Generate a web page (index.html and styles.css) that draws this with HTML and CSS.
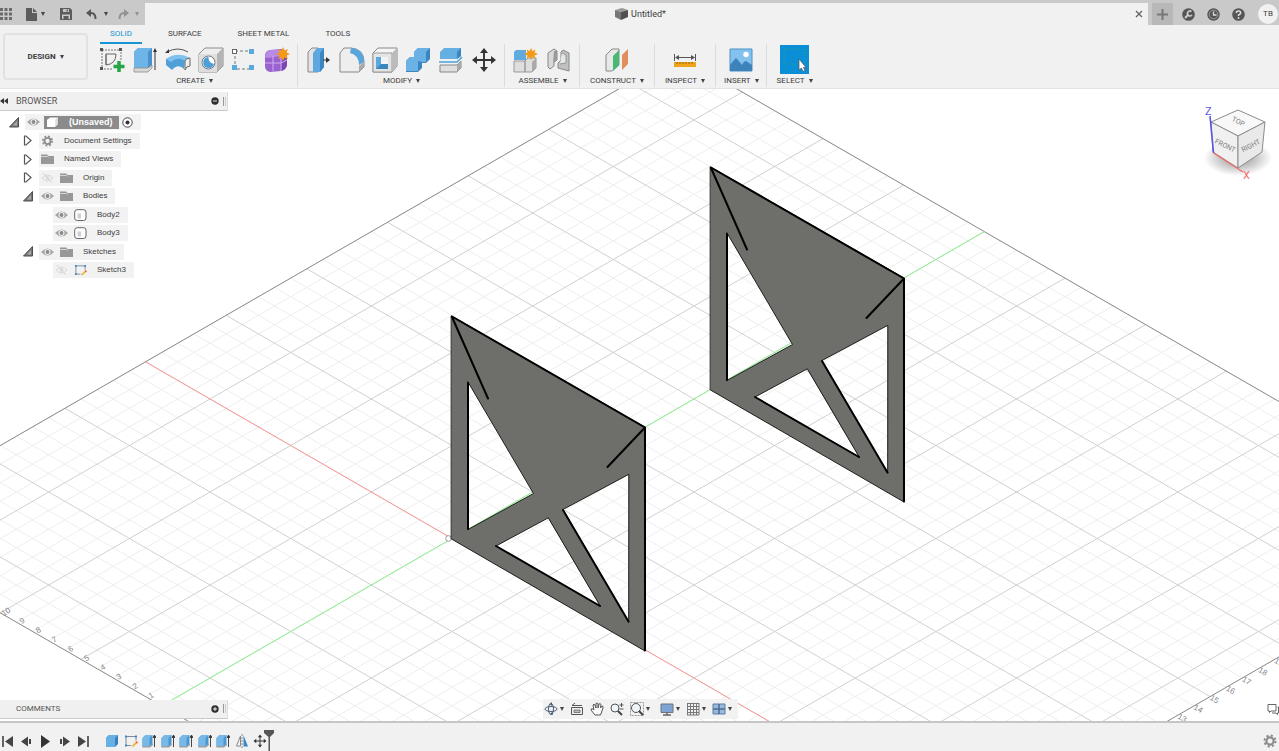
FILE: index.html
```html
<!DOCTYPE html>
<html lang="en">
<head>
<meta charset="utf-8">
<title>Untitled*</title>
<link rel="stylesheet" href="styles.css">
</head>
<body>
<svg class="defs" aria-hidden="true">
  <defs>
    <linearGradient id="g-blue" x1="0" y1="0" x2="1" y2="1"><stop offset="0" stop-color="#7dbcea"/><stop offset="1" stop-color="#4a9ad6"/></linearGradient>
    <radialGradient id="g-shadow"><stop offset="0" stop-color="#000" stop-opacity=".45"/><stop offset="1" stop-color="#000" stop-opacity="0"/></radialGradient>
  </defs>
  <symbol id="eye" viewBox="0 0 13 12"><path d="M0 6Q6.500-1 13 6Q6.500 13 0 6Z" fill="#a3a3a3"/><circle cx="6.500" cy="6" r="3" fill="#eee"/><circle cx="6.500" cy="6" r="1.900" fill="#8a8a8a"/></symbol>
  <symbol id="eye-off" viewBox="0 0 13 12"><path d="M1 6Q6.500 0 12 6Q6.500 12 1 6Z" fill="none" stroke="#d9d9d9"/><circle cx="6.500" cy="6" r="2" fill="#ddd"/><path d="M2 1L11 11" stroke="#d4d4d4"/></symbol>
  <symbol id="folder" viewBox="0 0 13 12"><path d="M0 1.500H6L7.500 3H13V11H0Z" fill="#989898"/><path d="M0 3.500H6.500L7.500 4.500" stroke="#e4e4e4" stroke-width=".8" fill="none"/></symbol>
  <symbol id="gear" viewBox="0 0 14 14"><g fill="none" stroke="#8c8c8c"><circle cx="7" cy="7" r="3.600" stroke-width="2.200"/><circle cx="7" cy="7" r="5.500" stroke-width="2" stroke-dasharray="2.160 2.160"/></g></symbol>
  <symbol id="body" viewBox="0 0 13 12"><rect x=".7" y=".7" width="11.300" height="10.800" rx="2.500" fill="#fff" stroke="#60646e"/><rect x="3.500" y="4.500" width="3.500" height="5" fill="#d0d0d3"/></symbol>
  <symbol id="component" viewBox="0 0 14 13"><path d="M1 4L4 1H13V9L10 12H1Z" fill="#fafafa" stroke="#777" stroke-linejoin="round"/><path d="M1 4H10V12H1Z" fill="#fff"/><path d="M10 4L13 1V9L10 12Z" fill="#ddd"/></symbol>
  <symbol id="sketch" viewBox="0 0 14 13"><path d="M2 2H12V6M2 2V11H7" fill="none" stroke="#687f96" stroke-width=".9"/><g fill="#4388bd"><path d="M1 1h2v2h-2zM11 1h2v2h-2zM1 10h2v2h-2z"/></g><path d="M7.500 11.500L12 7L13.500 8.500L9 12.500Z" fill="#f2b542"/><path d="M12 7L13.500 8.500" stroke="#e0614d" stroke-width="1.500"/></symbol>
  <symbol id="open" viewBox="0 0 10 11"><path d="M9.500 .5V10H.5Z" fill="#777" stroke="#4e4e4e"/><path d="M8 4V8.500H4Z" fill="#aaa"/></symbol>
  <symbol id="closed" viewBox="0 0 10 11"><path d="M1.500 1H3L8 5.500L3 10H1.500Z" fill="#fff" stroke="#555" stroke-width="1.200"/></symbol>
  <symbol id="extrude" viewBox="0 0 14 14"><path d="M.5 4L3.500 1H10.500V10L7.500 13H.5Z" fill="#4b98d0"/><path d="M.5 4L3.500 1H10.500L7.500 4V12H.5Z" fill="#77b8e8"/><path d="M.5 12H8L11 9.500V11L8 13.500H.5Z" fill="#9a9fa4"/><path d="M12.500 13V2M11.200 3.500L12.500 1L13.800 3.500Z" stroke="#333" stroke-width=".9"/></symbol>
  <symbol id="move" viewBox="0 0 26 26"><path d="M13 4V22M4 13H22" stroke="#333" stroke-width="1.900"/><path d="M13 1L17 6H9ZM13 25L17 20H9ZM1 13L6 9V17ZM25 13L20 9V17Z" fill="#333"/></symbol>
</svg>

<header class="titlebar">
  <div class="quick">
    <button class="ib" aria-label="Data panel"><svg width="12" height="12"><path d="M0 0h3v3H0zM4.500 0h3v3h-3zM9 0h3v3H9zM0 4.500h3v3H0zM4.500 4.500h3v3h-3zM9 4.500h3v3H9zM0 9h3v3H0zM4.500 9h3v3h-3zM9 9h3v3H9z" fill="#6b6b6b"/></svg></button>
    <button class="ib file" aria-label="File"><svg width="11" height="13"><path d="M0 0H6V5H11V13H0ZM7 0L11 4H7Z" fill="#5c5c5c"/></svg><i class="caret"></i></button>
    <button class="ib save" aria-label="Save"><svg width="12" height="12"><path d="M0 0H10L12 2V12H0Z" fill="#5c5c5c"/><path d="M3 1H9V4H3ZM2 6.500H10V11H2Z" fill="#c9c9c9"/><path d="M6.500 1.500H8V3.500H6.500ZM3.500 8H8.500V11H3.500Z" fill="#5c5c5c"/></svg></button>
    <button class="ib undo" aria-label="Undo"><svg width="11" height="11"><path d="M1 4H5Q9.500 4 9.500 10" fill="none" stroke="#555" stroke-width="2"/><path d="M0 4L5 0V8Z" fill="#555"/></svg><i class="caret"></i></button>
    <button class="ib redo" aria-label="Redo"><svg width="11" height="11"><path d="M10 4H6Q1.500 4 1.500 10" fill="none" stroke="#929292" stroke-width="2"/><path d="M11 4L6 0V8Z" fill="#929292"/></svg><i class="caret pale"></i></button>
  </div>
  <div class="doc-tab">
    <svg width="13" height="12"><path d="M0 2L7 0L13 2L6 4Z" fill="#999"/><path d="M0 2L6 4V12L0 9Z" fill="#777"/><path d="M6 4L13 2V9L6 12Z" fill="#505050"/></svg>
    <span>Untitled*</span>
    <button class="ib close" aria-label="Close"><svg width="8" height="8"><path d="M1 1L7 7M7 1L1 7" stroke="#666" stroke-width="1.400"/></svg></button>
  </div>
  <div class="account">
    <button class="ib plus" aria-label="New tab"><svg width="11" height="11"><path d="M5.500 0V11M0 5.500H11" stroke="#777" stroke-width="2"/></svg></button>
    <button class="ib" aria-label="Extensions"><svg width="13" height="13"><circle cx="6.500" cy="6.500" r="6.300" fill="#555"/><path d="M3 10L6.500 6.500" stroke="#ccc" stroke-width="2"/><path d="M9.500 3.500A2.500 2.500 0 1 0 10 7" fill="none" stroke="#ccc" stroke-width="1.600"/></svg></button>
    <button class="ib" aria-label="Job status"><svg width="13" height="13"><circle cx="6.500" cy="6.500" r="6.200" fill="#555"/><circle cx="6.500" cy="6.500" r="4.300" fill="none" stroke="#aaa" stroke-width=".8"/><path d="M6.500 3.500V7H9.500" fill="none" stroke="#ddd" stroke-width="1.300"/></svg></button>
    <button class="ib" aria-label="Help"><svg width="13" height="13"><circle cx="6.500" cy="6.500" r="6.300" fill="#555"/><path d="M4.300 5Q4.300 3 6.500 3T8.700 5Q8.700 6 6.500 7V8" fill="none" stroke="#ddd" stroke-width="1.500"/><circle cx="6.500" cy="10" r="1" fill="#ddd"/></svg></button>
    <button class="avatar">TB</button>
  </div>
</header>

<section class="ribbon">
  <button class="workspace">DESIGN<i class="caret"></i></button>
  <div class="ribbon-main">
    <nav class="tabs">
      <a href="#solid" class="active">SOLID</a><a href="#surface">SURFACE</a><a href="#sheet">SHEET METAL</a><a href="#tools">TOOLS</a>
    </nav>
    <div class="groups">
      <div class="group create">
        <div class="tools">
          <button class="ib" aria-label="Create sketch"><svg width="26" height="26"><path d="M3 3H22V14M3 3V22H14" fill="none" stroke="#777" stroke-dasharray="2 1"/><path d="M7 7H17Q17 17 7 18ZM7 7V18" fill="none" stroke="#666"/><path d="M1 1h3v3H1zM20 1h3v3h-3zM1 20h3v3H1z" fill="#555"/><path d="M20 14V25M14.500 19.500H25.500" stroke="#25a447" stroke-width="3.500"/></svg></button>
          <button class="ib" aria-label="Extrude"><svg width="26" height="26"><path d="M2 5L6 1H20V19L16 23H2Z" fill="#4792cc"/><path d="M2 5L6 1H20L16 5V21H2Z" fill="#6fb4e7"/><path d="M2 21H16L20 18V21L16 25H2Z" fill="#d7d7d7" stroke="#8e8e8e" stroke-width=".8"/><path d="M23 23V4" stroke="#333"/><path d="M23 1L25 5H21Z" fill="#333"/></svg></button>
          <button class="ib" aria-label="Revolve"><svg width="26" height="26"><path d="M2 5Q13-1 23 5" fill="none" stroke="#555"/><path d="M0 6L4 2V6Z" fill="#333"/><path d="M1 12Q13 5 20 12L19 22Q13 16 7 23L1 18Z" fill="#519fd7"/><path d="M1 12Q13 4 25 11L20 14Q13 9 6 15Z" fill="#81c1ed"/><path d="M20 14Q21 11 25 11V19Q21 19 20 23Z" fill="#eee" stroke="#666"/></svg></button>
          <button class="ib" aria-label="Hole"><svg width="26" height="26"><path d="M1 7L7 1H25V19L19 25H1Z" fill="#eee" stroke="#8d8d8d"/><path d="M19 7L25 1V19L19 25Z" fill="#b4b4b4"/><path d="M1 7H19V25H1Z" fill="#dedede"/><circle cx="10.500" cy="15.500" r="6.500" fill="#fff" stroke="#6e7b86"/><path d="M10.500 10A5.500 5.500 0 1 0 16 17A7 7 0 0 1 10.500 10Z" fill="#4e9ed8"/></svg></button>
          <button class="ib" aria-label="Rectangular pattern"><svg width="26" height="26"><path d="M4 4H22M4 4V22H22" fill="none" stroke="#777" stroke-dasharray="3 2"/><rect x="1.500" y="2.500" width="4" height="4" fill="#fff" stroke="#666"/><path d="M18 2h5v5h-5zM1 18h5v5H1zM18 18h5v5h-5z" fill="#59a8e0"/></svg></button>
          <button class="ib" aria-label="Create form"><svg width="26" height="26"><path d="M1 9Q1 4 6 3L17 2Q23 3 23 8V18Q22 23 17 24L6 25Q1 24 1 19Z" fill="#9a62cf"/><path d="M1 10Q2 4 7 3H17Q20 6 17 9L3 11Z" fill="#b98be6"/><path d="M18 9Q23 7 23 9V18Q22 23 17 24Z" fill="#7c45b3"/><path d="M9 9V24M1 16H17L23 13M17 9V24" fill="none" stroke="#cfaef0"/><path d="M19 0L20.500 3.500L24 2L22.500 5.500L26 7L22.500 8.500L24 12L20.500 10.500L19 14L17.500 10.500L14 12L15.500 8.500L12 7L15.500 5.500L14 2L17.500 3.500Z" fill="#f39a18"/></svg></button>
        </div>
        <button class="menu">CREATE<i class="caret"></i></button>
      </div>
      <div class="group">
        <div class="tools">
          <button class="ib" aria-label="Press pull"><svg width="26" height="26"><path d="M2 5L6 1H12V25H2Z" fill="#e3e3e3" stroke="#888"/><path d="M7 6L11 1H18V20L14 25H7Z" fill="#5da9df"/><path d="M14 6L18 1V20L14 25Z" fill="#3b86bf"/><path d="M17 13H21" stroke="#333"/><path d="M20 10L24 13L20 16Z" fill="#333"/></svg></button>
          <button class="ib" aria-label="Fillet"><svg width="26" height="26"><path d="M1 6L5 1H12Q25 2 25 15V20L20 25H1Z" fill="#eee" stroke="#888"/><path d="M20 19L25 15V20L20 25Z" fill="#aaa"/><path d="M12 1Q25 2 25 15L20 18Q20 8 11 6Z" fill="#59a6dd"/></svg></button>
          <button class="ib" aria-label="Shell"><svg width="26" height="26"><path d="M1 6L6 1H25V19L20 25H1Z" fill="#f5f5f5" stroke="#888"/><path d="M1 6H20V25H1Z" fill="#e4e4e4" stroke="#999"/><path d="M20 6L25 1V19L20 25Z" fill="#bbb"/><path d="M4 10H16V22H4Z" fill="#5aa8df"/><path d="M9 10H16V17H9Z" fill="#f3f3f3"/><path d="M4 22L9 17H16V22Z" fill="#3a86be"/></svg></button>
          <button class="ib" aria-label="Combine"><svg width="26" height="26"><path d="M9 5L13 1H25V12L21 16H17V21L13 25H1V14L5 10H9Z" fill="#3a86c0"/><path d="M9 5L13 1H25L21 5V15H17L13 14V24H1V14L5 10H9Z" fill="#6ab2e6"/></svg></button>
          <button class="ib" aria-label="Split body"><svg width="26" height="26"><path d="M2 5L6 1H23V9L19 12H2Z" fill="#66afe3"/><path d="M19 5L23 1V9L19 12Z" fill="#3b86bf"/><path d="M1 15H19L24 10" fill="none" stroke="#4ba0dc" stroke-width="1.500"/><path d="M2 18H19L23 14V21L19 25H2Z" fill="#dedede" stroke="#888"/><path d="M19 18L23 14V21L19 25Z" fill="#aaa"/></svg></button>
          <button class="ib" aria-label="Move"><svg width="26" height="26"><use href="#move"/></svg></button>
        </div>
        <button class="menu">MODIFY<i class="caret"></i></button>
      </div>
      <div class="group">
        <div class="tools">
          <button class="ib" aria-label="New component"><svg width="26" height="26"><path d="M1 5L3 3H13V13H1Z" fill="#5fabe0"/><path d="M1 14H12V25H1ZM12 14L15 11H23V21L19 25H12Z" fill="#dedede" stroke="#999"/><path d="M19 15L23 11V21L19 25Z" fill="#aaa"/><path d="M18 1L19.500 4L22.500 2.500L21.500 5.500L25 7L21.500 8.500L22.500 11.500L19.500 10L18 13L16.500 10L13.500 11.500L14.500 8.500L11 7L14.500 5.500L13.500 2.500L16.500 4Z" fill="#f39a18"/></svg></button>
          <button class="ib" aria-label="Joint"><svg width="26" height="26"><path d="M2 6L8 2L11 4V13L8 15V19L4 22L2 20Z" fill="#d9d9d9" stroke="#888"/><path d="M8 4L11 4V13L7 16Z" fill="#999"/><path d="M23 6L17 3L15 5V13L12 16V21L23 24Z" fill="#bfc1c3" stroke="#888"/><path d="M16 6L20 8V16L14 17" fill="#e7e7e7" stroke="#8d969d"/></svg></button>
        </div>
        <button class="menu">ASSEMBLE<i class="caret"></i></button>
      </div>
      <div class="group wide">
        <div class="tools"><button class="ib" aria-label="Offset plane"><svg width="26" height="26"><path d="M2 8L8 2H15V18L8 24H2Z" fill="#e8e8e8" stroke="#888"/><path d="M9 9L15 3V18L9 24Z" fill="#48b972"/><path d="M18 8L24 2V17L18 23Z" fill="#df8f5c"/></svg></button></div>
        <button class="menu">CONSTRUCT<i class="caret"></i></button>
      </div>
      <div class="group wide">
        <div class="tools"><button class="ib" aria-label="Measure"><svg width="26" height="26"><path d="M2.500 7V14M23.500 7V14M4 10.500H22" stroke="#555"/><path d="M3 10.500L7 8V13ZM23 10.500L19 8V13Z" fill="#555"/><path d="M2 15H24V20H2Z" fill="#f0a41a"/><path d="M5 15V17M8 15V17M11 15V17M14 15V17M17 15V17M20 15V17" stroke="#8f6510"/></svg></button></div>
        <button class="menu">INSPECT<i class="caret"></i></button>
      </div>
      <div class="group">
        <div class="tools"><button class="ib" aria-label="Insert image"><svg width="26" height="26"><path d="M2 2H24V24H2Z" fill="#83c2ef" stroke="#4b91c5"/><circle cx="18" cy="7.500" r="2.700" fill="#fff"/><path d="M2 18Q5 14 8 11Q11 14 14 18Q16 14 18 14Q21 16 24 18V24H2Z" fill="#3b83ba"/></svg></button></div>
        <button class="menu">INSERT<i class="caret"></i></button>
      </div>
      <div class="group wide">
        <div class="tools"><button class="ib selected" aria-label="Select"><svg width="29" height="29"><path d="M4 4H25V19H4Z" fill="none" stroke="#2fa777" stroke-dasharray="1 2"/><path d="M19 14V25L21.500 23L23 26.500L25 25.500L23.500 22.500H26Z" fill="#fff" stroke="#555" stroke-width=".7"/></svg></button></div>
        <button class="menu">SELECT<i class="caret"></i></button>
      </div>
    </div>
  </div>
</section>

<main class="viewport">
  <svg class="scene" viewBox="0 89 1279 632" preserveAspectRatio="xMinYMin slice" role="img" aria-label="Model">
    <g id="grid"></g>
    <circle cx="448.500" cy="538.500" r="2.800" fill="#fff" stroke="#999"/>
    <defs>
      <g id="plate" stroke-linejoin="round" stroke-linecap="round">
        <path fill="#6e6f6a" fill-rule="evenodd" stroke="#1e1e1c" d="M451.500 316L645 427V651L451.500 539ZM468 382L533.500 493.500L468 529.500ZM548 518L496 546L600 606ZM628.500 474.500L563 509.500L628.500 622Z"/>
        <path fill="none" stroke="#000" stroke-width="2" d="M452 316.500L645 427.500V650.500M452 317L488 398.500M645 427.500L607.500 467M468 383V529M496 546L600 606M563 510L628.500 621.500"/>
      </g>
    </defs>
    <use href="#plate" x="259" y="-149"/>
    <use href="#plate"/>
  </svg>

  <aside class="browser">
    <header class="panel-head"><svg width="8" height="6"><path d="M4 0V6L0 3ZM8 0V6L4 3Z" fill="#333"/></svg><h2>BROWSER</h2><button class="ib" aria-label="Collapse"><svg width="8" height="8"><circle cx="4" cy="4" r="3.700" fill="#2e2e2e"/><path d="M2 4H6" stroke="#ddd"/></svg></button><i class="grip"></i></header>
    <ul class="tree">
      <li><svg class="arrow"><use href="#open"/></svg><div class="node"><svg class="ic"><use href="#eye"/></svg><span class="root"><svg class="ic"><use href="#component"/></svg><b>(Unsaved)</b></span><svg width="11" height="11"><circle cx="5.500" cy="5.500" r="4.700" fill="#fff" stroke="#444"/><circle cx="5.500" cy="5.500" r="2" fill="#333"/></svg></div></li>
      <li class="d1"><svg class="arrow"><use href="#closed"/></svg><div class="node"><svg class="ic"><use href="#gear"/></svg><span>Document Settings</span></div></li>
      <li class="d1"><svg class="arrow"><use href="#closed"/></svg><div class="node"><svg class="ic"><use href="#folder"/></svg><span>Named Views</span></div></li>
      <li class="d1"><svg class="arrow"><use href="#closed"/></svg><div class="node"><svg class="ic"><use href="#eye-off"/></svg><svg class="ic"><use href="#folder"/></svg><span>Origin</span></div></li>
      <li class="d1"><svg class="arrow"><use href="#open"/></svg><div class="node"><svg class="ic"><use href="#eye"/></svg><svg class="ic"><use href="#folder"/></svg><span>Bodies</span></div></li>
      <li class="d2"><div class="node"><svg class="ic"><use href="#eye"/></svg><svg class="ic"><use href="#body"/></svg><span>Body2</span></div></li>
      <li class="d2"><div class="node"><svg class="ic"><use href="#eye"/></svg><svg class="ic"><use href="#body"/></svg><span>Body3</span></div></li>
      <li class="d1"><svg class="arrow"><use href="#open"/></svg><div class="node"><svg class="ic"><use href="#eye"/></svg><svg class="ic"><use href="#folder"/></svg><span>Sketches</span></div></li>
      <li class="d2"><div class="node"><svg class="ic"><use href="#eye-off"/></svg><svg class="ic"><use href="#sketch"/></svg><span>Sketch3</span></div></li>
    </ul>
  </aside>

  <svg class="cube" width="74" height="88" viewBox="1200 100 74 88" role="img" aria-label="View cube">
    <ellipse cx="1238" cy="158" rx="34" ry="18" fill="url(#g-shadow)"/>
    <g stroke="#8c8c8c" stroke-linejoin="round"><path d="M1211 122L1238 110L1265 122L1238 136Z" fill="#f8f8f8"/><path d="M1211 122L1238 136V168L1213 152Z" fill="#f0f0f0"/><path d="M1238 136L1265 122L1262 152L1238 168Z" fill="#e9e9e9"/></g>
    <path d="M1210 116L1213.500 153" stroke="#5a55e6" stroke-width="1.600"/><path d="M1213.500 153L1243 172" stroke="#f07070" stroke-width="1.400"/>
    <g class="cube-face"><text transform="translate(1238 122) rotate(26)">TOP</text><text transform="translate(1225 146) rotate(26)">FRONT</text><text transform="translate(1251 146) rotate(-28)">RIGHT</text></g>
    <text class="axis-z" x="1205" y="115">Z</text><text class="axis-x" x="1243" y="179">X</text>
  </svg>

  <footer class="overlay">
    <section class="comments panel-head"><h2>COMMENTS</h2><button class="ib" aria-label="Add comment"><svg width="8" height="8"><circle cx="4" cy="4" r="3.700" fill="#2e2e2e"/><path d="M2 4H6M4 2V6" stroke="#eee"/></svg></button><i class="grip"></i></section>
    <div class="navbar">
      <button class="ib" aria-label="Orbit"><svg width="14" height="14"><g fill="none" stroke="#4c6076"><ellipse cx="7" cy="7" rx="2.500" ry="5.500"/><ellipse cx="7" cy="7" rx="6" ry="2.500"/></g><path d="M5.500 2L8 0V4ZM8.500 9.500L6 12L9 13Z" fill="#4c6076"/></svg><i class="caret"></i></button>
      <button class="ib" aria-label="Look at"><svg width="14" height="14"><path d="M1.500 5.500H12.500V12.500H1.500Z" fill="#eee" stroke="#555"/><path d="M4 8H10V10.500H4Z" fill="#bbb" stroke="#666" stroke-width=".8"/><path d="M2 3.500H12M5 1L2 3.500" fill="none" stroke="#555"/></svg></button>
      <button class="ib" aria-label="Pan"><svg width="14" height="14"><path d="M5 13L1 8Q1 6 3 7L4 8L3 3Q4 1.500 5 3L6 6V1.500Q7 .5 8 1.500V6L9 2Q10 1 11 2.500L10.500 6L12 4Q13.500 4 13 6L10.500 13Z" fill="#fafafa" stroke="#555"/></svg></button>
      <button class="ib" aria-label="Zoom"><svg width="14" height="14"><circle cx="5" cy="6" r="4" fill="#eef4f8" stroke="#555"/><path d="M8 9L12 13" stroke="#444" stroke-width="2"/><path d="M9.500 3H13.500M11.500 1V5M9.500 7H13.500" stroke="#555"/></svg></button>
      <button class="ib" aria-label="Zoom window"><svg width="14" height="14"><path d="M.5 .5H13.500V13.500H.5Z" fill="none" stroke="#999" stroke-dasharray="2 1"/><circle cx="6" cy="6" r="4.500" fill="#eef4f8" stroke="#555"/><path d="M9 9L13 13" stroke="#444" stroke-width="2"/></svg><i class="caret"></i></button>
      <button class="ib display" aria-label="Display settings"><svg width="14" height="14"><path d="M1 2H13V10.500H1Z" fill="#7da4d2" stroke="#6b727b"/><path d="M7 11V13M3 13H11" stroke="#666" stroke-width="1.500"/></svg><i class="caret"></i></button>
      <button class="ib" aria-label="Grid settings"><svg width="14" height="14"><path d="M1 1.500H13M1 4.500H13M1 7.500H13M1 10.500H13M1.500 1V13M4.500 1V13M7.500 1V13M10.500 1V13M13 1V13M1 13H13" stroke="#777"/></svg><i class="caret"></i></button>
      <button class="ib" aria-label="Viewports"><svg width="14" height="14"><path d="M1 2H13V12H1Z" fill="#96b9de" stroke="#5d7da3"/><path d="M7 2V12M1 7H13" stroke="#4e6b91" stroke-width="1.500"/></svg><i class="caret"></i></button>
    </div>
    <button class="ib chat" aria-label="Chat"><svg width="12" height="12"><path d="M1 1.500H9V8H4L2.500 9.500V8H1Z" fill="#fff" stroke="#666"/><path d="M10.500 4H11.500V10H10.500V11.500L9 10H5" fill="none" stroke="#666"/></svg></button>
  </footer>
</main>

<footer class="timeline">
  <div class="playback">
    <button class="ib" aria-label="To start"><svg width="13" height="13"><path d="M2 1V12" stroke="#333" stroke-width="1.500"/><path d="M12 1V12L4 6.500Z" fill="#444"/></svg></button>
    <button class="ib" aria-label="Step back"><svg width="13" height="13"><path d="M8 1.500V11.500L1 6.500ZM9 4H11V9H9Z" fill="#444"/></svg></button>
    <button class="ib" aria-label="Play"><svg width="13" height="13"><path d="M2 0V13L11 6.500Z" fill="#333"/></svg></button>
    <button class="ib" aria-label="Step forward"><svg width="13" height="13"><path d="M5 1.500V11.500L12 6.500ZM2 4H4V9H2Z" fill="#444"/></svg></button>
    <button class="ib" aria-label="To end"><svg width="13" height="13"><path d="M11 1V12" stroke="#333" stroke-width="1.500"/><path d="M1 1V12L9 6.500Z" fill="#444"/></svg></button>
  </div>
  <div class="features">
    <button class="ib" aria-label="Box"><svg width="14" height="14"><path d="M1 4L4 1H13V10L10 13H1Z" fill="#3680bb"/><path d="M1 4L4 1H13L10 4V13H1Z" fill="#68b0e4"/></svg></button>
    <button class="ib" aria-label="Sketch"><svg width="14" height="14"><use href="#sketch"/></svg></button>
    <button class="ib" aria-label="Extrude 1"><svg width="14" height="14"><use href="#extrude"/></svg></button>
    <button class="ib" aria-label="Extrude 2"><svg width="14" height="14"><use href="#extrude"/></svg></button>
    <button class="ib" aria-label="Extrude 3"><svg width="14" height="14"><use href="#extrude"/></svg></button>
    <button class="ib" aria-label="Extrude 4"><svg width="14" height="14"><use href="#extrude"/></svg></button>
    <button class="ib" aria-label="Extrude 5"><svg width="14" height="14"><use href="#extrude"/></svg></button>
    <button class="ib" aria-label="Mirror"><svg width="14" height="14"><path d="M5.500 2V12H1.500Z" fill="#f5f5f5" stroke="#888"/><path d="M8.500 1V12.500H13Z" fill="#3c88c4"/><path d="M7 0V14" stroke="#888" stroke-dasharray="2 1"/></svg></button>
    <button class="ib" aria-label="Move"><svg width="14" height="14"><use href="#move"/></svg></button>
  </div>
  <svg class="marker" width="10" height="22"><path d="M0 0H10V3L6 7V22H4.500V7L0 3Z" fill="#555"/></svg>
  <button class="ib settings" aria-label="Timeline settings"><svg width="14" height="14"><use href="#gear"/></svg></button>
</footer>
<script src="grid.js"></script>
</body>
</html>
```
FILE: styles.css
```css
* { box-sizing: border-box; }
body { margin: 0; height: 100vh; display: flex; flex-direction: column; overflow: hidden; background: #fff; color: #3c3c3c; font: 8px/12px Roboto, "Liberation Sans", sans-serif; }
button { font: inherit; color: inherit; border: 0; padding: 0; background: none; }
svg { display: block; flex: none; }
.defs { position: absolute; width: 0; height: 0; }
.ib { display: flex; align-items: center; gap: 4px; flex: none; }
.caret { flex: none; border: 2px solid transparent; border-top: 4px solid #444; border-bottom: 0; }
.caret.pale { border-top-color: #929292; }

.titlebar { display: flex; flex: none; height: 25px; padding-top: 3px; background: #c8c9c8; }
.quick { display: flex; align-items: center; width: 145px; }
.file { margin-left: 14px; }
.save { margin-left: 15px; }
.undo { margin-left: 14px; gap: 7px; }
.redo { margin-left: 10px; gap: 6px; }
.doc-tab { flex: 1; display: flex; align-items: center; justify-content: center; gap: 3px; position: relative; padding-right: 12px; background: #f1f1f1; font-size: 9px; }
.doc-tab .close { position: absolute; right: 5px; }
.account { display: flex; align-items: center; gap: 12px; width: 131px; padding-left: 4px; }
.plus { width: 21px; height: 22px; margin-right: -3px; justify-content: center; background: #b7b8b7; }
.avatar { flex: none; width: 20px; height: 20px; margin-left: 1px; border-radius: 50%; background: #f1f1f1; }

.ribbon { display: flex; flex: none; height: 64px; padding-left: 3px; background: #f1f1f1; border-bottom: 1px solid #e3e3e3; }
.workspace { display: flex; align-items: center; justify-content: center; gap: 4px; width: 85px; height: 47px; margin-top: 8px; border: 2px solid #e2e2e2; border-radius: 4px; font-weight: 700; }
.ribbon-main { padding-left: 7px; }
.tabs { display: flex; gap: 16px; padding-left: 5px; }
.tabs a { padding: 3px 10px 2px; color: inherit; text-decoration: none; border-bottom: 2px solid transparent; }
.tabs .active { color: #1695d3; border-color: #1695d3; }
.groups { display: flex; }
.group { display: flex; flex-direction: column; align-items: center; padding: 0 7px 0 8px; border-right: 1px solid #dcdcdc; height: 43px; }
.group:last-child { border: 0; }
.create { padding: 0 7px 0 4px; }
.wide { padding: 0 10px; }
.tools { display: flex; align-items: center; gap: 7px; height: 31px; }
.selected { background: #0a8fd6; }
.menu { display: flex; align-items: center; gap: 4px; flex: none; }

.viewport { flex: 1; min-height: 0; position: relative; display: flex; flex-direction: column; justify-content: space-between; padding-top: 3px; overflow: hidden; background: #fff; }
.scene { position: absolute; inset: 0; width: 100%; height: 100%; }
.minor { stroke: #eee; fill: none; }
.major { stroke: #d0d0d0; fill: none; }
.edge { stroke: #8a8a8a; fill: none; }
.axis-red { stroke: #ff9b9b; }
.axis-green { stroke: #8ff58f; }
.ruler text { font: 8px "Liberation Sans", sans-serif; fill: #858585; text-anchor: middle; }
.browser { position: relative; width: 228px; }
.panel-head { display: flex; align-items: center; gap: 8px; height: 19px; width: 228px; background: #f0f0f0; border-bottom: 1px solid #c9c9c9; border-right: 1px solid #ddd; }
.panel-head h2 { flex: 1; margin: 0; font-size: 8px; font-weight: 400; color: #555; }
.browser .panel-head h2 { font-size: 9px; }
.panel-head .grip { width: 3px; height: 9px; margin: 0 1px 0 -4px; border-left: 1px solid #999; border-right: 1px solid #ccc; }
.tree { display: flex; flex-direction: column; justify-content: space-between; height: 164px; margin: 3px 0 0; padding: 0; list-style: none; font-family: "Liberation Sans", sans-serif; }
.tree li { display: flex; align-items: center; gap: 6px; height: 16px; padding-left: 9px; }
.tree .d1 { padding-left: 23px; }
.tree .d2 { padding-left: 53px; }
.arrow { width: 10px; height: 11px; }
.ic { width: 13px; height: 12px; }
.node { display: flex; align-items: center; gap: 6px; height: 16px; padding: 0 8px 0 2px; background: #f2f2f2; }
.node > span { padding-left: 4px; }
.node .root { display: flex; align-items: center; gap: 10px; height: 13px; padding: 0 6px 0 2px; margin: 0 -3px 0 -2px; background: #8b8b8b; color: #fff; font-size: 9px; }
.cube { position: absolute; top: 11px; right: 5px; }
.cube-face text { font: 7px Roboto, sans-serif; fill: #7d7d7d; text-anchor: middle; dominant-baseline: middle; }
.axis-z, .axis-x { font: 11px Roboto, sans-serif; fill: #5a55e6; }
.axis-x { fill: #f07070; }

.overlay { position: relative; display: flex; align-items: center; height: 22px; padding-bottom: 2px; }
.comments { flex: none; padding-left: 16px; }
.navbar { display: flex; align-items: center; gap: 6px; height: 20px; margin-left: 315px; padding: 0 6px 0 1px; background: #f2f2f2; }
.navbar .ib { gap: 2px; }
.navbar .display { margin-left: 4px; }
.chat { margin-left: auto; }

.timeline { display: flex; flex: none; align-items: center; height: 30px; padding: 8px 0 0 1px; background: #f1f1f1; border-top: 2px solid #c6c6c6; }
.playback { display: flex; gap: 6px; margin-right: 15px; }
.features { display: flex; justify-content: space-between; width: 162px; }
.marker { margin-left: -3px; }
.settings { margin: 0 2px 0 auto; }
```
FILE: grid.js
```js
// Isometric ground plane: u runs down-right (red axis), v runs up-right (green axis).
const ORIGIN = [452, 538.5];
const STEP = [16.13, 9.3];
const U = [-19, 32];
const V = [-18, 33];
const grid = document.getElementById('grid');

const point = (u, v) => [
  ORIGIN[0] + (u + v) * STEP[0],
  ORIGIN[1] + (u - v) * STEP[1],
];
const segment = (u1, v1, u2, v2) => `M${point(u1, v1)}L${point(u2, v2)}`;

function add(parent, name, attrs, text) {
  const el = document.createElementNS('http://www.w3.org/2000/svg', name);
  for (const key in attrs) el.setAttribute(key, attrs[key]);
  if (text !== undefined) el.textContent = text;
  return parent.appendChild(el);
}

let minor = '';
let major = '';
for (let u = U[0]; u <= U[1]; u++) {
  const line = segment(u, V[0], u, V[1]);
  if (u % 5) minor += line; else major += line;
}
for (let v = V[0]; v <= V[1]; v++) {
  const line = segment(U[0], v, U[1], v);
  if (v % 5) minor += line; else major += line;
}
add(grid, 'path', { class: 'minor', d: minor });
add(grid, 'path', { class: 'major', d: major });
add(grid, 'path', { class: 'edge', d: `M${point(U[0], V[0])}L${point(U[1], V[0])}L${point(U[1], V[1])}L${point(U[0], V[1])}Z` });
add(grid, 'path', { class: 'axis-red', d: segment(U[0], 0, U[1], 0) });
add(grid, 'path', { class: 'axis-green', d: segment(0, V[0], 0, V[1]) });

const ruler = add(grid, 'g', { class: 'ruler' });
for (let n = 1; n <= 10; n++) {
  const [x, y] = point(-n, V[0]);
  add(ruler, 'text', { transform: `translate(${x + 7} ${y + 1}) rotate(-30)` }, n);
}
for (let n = 13; n <= 19; n++) {
  const [x, y] = point(U[1], n);
  add(ruler, 'text', { transform: `translate(${x + 3} ${y + 5}) rotate(30)` }, n);
}
```
